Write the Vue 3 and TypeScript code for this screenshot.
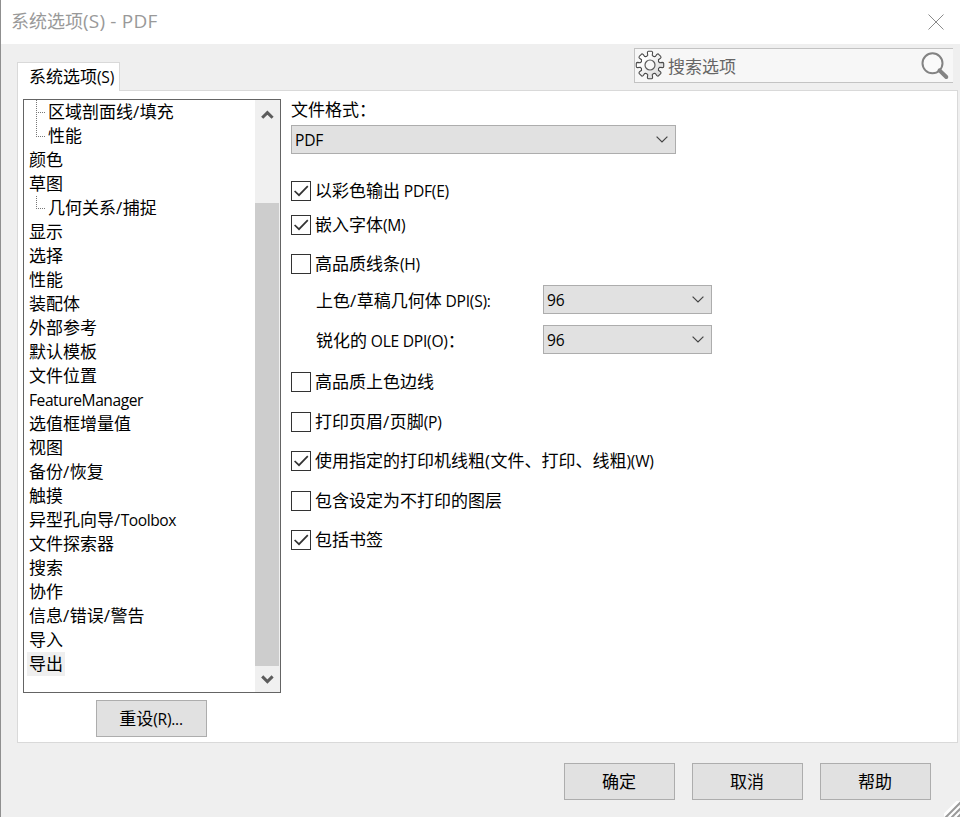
<script setup lang="ts">
import { defineComponent, h, ref } from 'vue'

interface TreeItem {
  label: string
  child?: boolean
  last?: boolean
}

interface Check {
  kind: 'check'
  label: string
  on: boolean
}

interface Dpi {
  kind: 'dpi'
  label: string
  value: string
}

function runClass(run: string): string {
  if (/^[^\x20-\x7e]/.test(run)) return 'han'
  if (run === '/' || run === '(') return 'latin sym'
  return /[a-z]{2}/.test(run) ? 'latin word' : 'latin'
}

// Renders a label with its Latin runs in the smaller interface face.
const Mixed = defineComponent({
  props: { text: { type: String, required: true } },
  setup(props) {
    return () => {
      const runs = props.text.match(/\/|[\x20-\x2e\x30-\x7e]+|[^\x20-\x7e]+/g) ?? []
      return h(
        'span',
        { class: 'mixed' },
        runs.map((r) => h('span', { class: runClass(r) }, r)),
      )
    }
  },
})

const tree: TreeItem[] = [
  { label: '区域剖面线/填充', child: true },
  { label: '性能', child: true, last: true },
  { label: '颜色' },
  { label: '草图' },
  { label: '几何关系/捕捉', child: true, last: true },
  { label: '显示' },
  { label: '选择' },
  { label: '性能' },
  { label: '装配体' },
  { label: '外部参考' },
  { label: '默认模板' },
  { label: '文件位置' },
  { label: 'FeatureManager' },
  { label: '选值框增量值' },
  { label: '视图' },
  { label: '备份/恢复' },
  { label: '触摸' },
  { label: '异型孔向导/Toolbox' },
  { label: '文件探索器' },
  { label: '搜索' },
  { label: '协作' },
  { label: '信息/错误/警告' },
  { label: '导入' },
  { label: '导出' },
]
const selected = ref(tree.length - 1)

const options = ref<(Check | Dpi)[]>([
  { kind: 'check', label: '以彩色输出 PDF(E)', on: true },
  { kind: 'check', label: '嵌入字体(M)', on: true },
  { kind: 'check', label: '高品质线条(H)', on: false },
  { kind: 'dpi', label: '上色/草稿几何体 DPI(S):', value: '96' },
  { kind: 'dpi', label: '锐化的 OLE DPI(O)：', value: '96' },
  { kind: 'check', label: '高品质上色边线', on: false },
  { kind: 'check', label: '打印页眉/页脚(P)', on: false },
  { kind: 'check', label: '使用指定的打印机线粗(文件、打印、线粗)(W)', on: true },
  { kind: 'check', label: '包含设定为不打印的图层', on: false },
  { kind: 'check', label: '包括书签', on: true },
])

function toggle(o: Check | Dpi) {
  if (o.kind === 'check') o.on = !o.on
}

// Outline of the eight-toothed gear around (15, 15).
function gear(): string {
  const pts: string[] = []
  const p = (r: number, deg: number) => {
    const a = (deg * Math.PI) / 180
    return `${(15 + r * Math.cos(a)).toFixed(2)} ${(15 + r * Math.sin(a)).toFixed(2)}`
  }
  for (let i = 0; i < 8; i++) {
    const c = i * 45 - 90
    pts.push(`${i === 0 ? 'M' : 'L'}${p(10, c - 13)}`)
    pts.push(`L${p(12.6, c - 12)}`)
    pts.push(`Q${p(14, c - 10)} ${p(13.8, c - 6)}`)
    pts.push(`L${p(13.8, c + 6)}`)
    pts.push(`Q${p(14, c + 10)} ${p(12.6, c + 12)}`)
    pts.push(`L${p(10, c + 13)}`)
    pts.push(`Q${p(8.6, c + 22.5)} ${p(10, c + 32)}`)
  }
  return pts.join(' ') + 'Z'
}
const gearPath = gear()
</script>

<template>
  <div class="window">
    <header class="titlebar">
      <h1 class="title"><Mixed text="系统选项(S) - PDF" /></h1>
      <svg class="close" width="16" height="16" viewBox="0 0 16 16">
        <path d="M.5 .5 15.5 15.5M15.5 .5 .5 15.5" fill="none" stroke="#8a8a8a" stroke-width="1" />
      </svg>
    </header>

    <div class="top">
      <div class="tab"><Mixed text="系统选项(S)" /></div>
      <div class="search">
        <svg class="gear" width="30" height="30" viewBox="0 0 30 30">
          <defs>
            <linearGradient id="gearFill" x1="0" y1="0" x2="1" y2="1">
              <stop offset="0.3" stop-color="#ffffff" />
              <stop offset="1" stop-color="#cfcfcf" />
            </linearGradient>
          </defs>
          <path :d="gearPath" fill="url(#gearFill)" stroke="#4a4a4a" stroke-width="1.1" />
          <circle cx="15" cy="15" r="5" fill="#f7f7f7" stroke="#5a5a5a" stroke-width="1.2" />
        </svg>
        <span class="hint">搜索选项</span>
        <svg class="lens" width="30" height="30" viewBox="0 0 30 30">
          <circle cx="12.5" cy="12.3" r="10" fill="#fafafa" stroke="#838383" stroke-width="2" />
          <path d="M19.5 19.3 26.3 26" stroke="#838383" stroke-width="4" stroke-linecap="round" />
        </svg>
      </div>
    </div>

    <main class="panel">
      <div class="left">
        <div class="tree">
          <ul class="items">
            <li
              v-for="(t, i) in tree"
              :key="i"
              class="item"
              :class="{ child: t.child, selected: i === selected }"
              @click="selected = i"
            >
              <svg v-if="t.child" class="branch" width="14" height="24" viewBox="0 0 14 24">
                <path
                  :d="t.last ? 'M4.5 0V12.5' : 'M4.5 0V24'"
                  fill="none"
                  stroke="#777"
                  stroke-dasharray="1 1"
                />
                <path d="M4 12.5H13" fill="none" stroke="#777" stroke-dasharray="1 1" />
              </svg>
              <span class="label"><Mixed :text="t.label" /></span>
            </li>
          </ul>
          <div class="scrollbar">
            <svg width="25" height="103" viewBox="0 0 25 103">
              <path d="M7.2 17.8 12.4 12.6 17.6 17.8" fill="none" stroke="#5c5c5c" stroke-width="3" />
            </svg>
            <div class="thumb"></div>
            <svg width="25" height="26" viewBox="0 0 25 26">
              <path d="M7.2 10.4 12.4 15.6 17.6 10.4" fill="none" stroke="#5c5c5c" stroke-width="3" />
            </svg>
          </div>
        </div>
        <button class="btn reset"><Mixed text="重设(R)..." /></button>
      </div>

      <section class="form">
        <div class="format-label">文件格式：</div>
        <div class="select wide">
          <span class="latin">PDF</span>
          <svg width="12" height="7" viewBox="0 0 12 7">
            <path d="M.6 .6 6 6 11.4 .6" fill="none" stroke="#444" stroke-width="1.2" />
          </svg>
        </div>
        <div class="spacer"></div>
        <div
          v-for="o in options"
          :key="o.label"
          class="option"
          :class="o.kind"
          @click="toggle(o)"
        >
          <template v-if="o.kind === 'check'">
            <span class="box">
              <svg v-if="o.on" width="18" height="18" viewBox="0 0 18 18">
                <path d="M2.6 9 7 13.2 15.8 4.2" fill="none" stroke="#333" stroke-width="1.7" />
              </svg>
            </span>
            <span class="check-label"><Mixed :text="o.label" /></span>
          </template>
          <template v-else>
            <span class="dpi-label"><Mixed :text="o.label" /></span>
            <div class="select">
              <span class="latin">{{ o.value }}</span>
              <svg width="12" height="7" viewBox="0 0 12 7">
                <path d="M.6 .6 6 6 11.4 .6" fill="none" stroke="#444" stroke-width="1.2" />
              </svg>
            </div>
          </template>
        </div>
      </section>
    </main>

    <footer class="footer">
      <button class="btn">确定</button>
      <button class="btn">取消</button>
      <button class="btn">帮助</button>
      <svg class="grip" width="16" height="16" viewBox="0 0 16 16">
        <path d="M0 16 16 0M6 16 16 6M12 16 16 12" stroke="#fff" stroke-width="5" />
        <path d="M1 17 17 1M7 17 17 7M13 17 17 13" stroke="#9a9a9a" stroke-width="2" />
      </svg>
    </footer>
  </div>
</template>

<style>
body {
  margin: 0;
  overflow: hidden;
}
</style>

<style scoped>
.window {
  box-sizing: border-box;
  width: 960px;
  height: 817px;
  display: flex;
  flex-direction: column;
  border-left: 1px solid #8f8f8f;
  background: #efefef;
  color: #000;
  font-family: 'Noto Sans CJK SC', sans-serif;
  font-size: 17px;
  line-height: 22px;
  position: relative;
}
.window :deep(.mixed) {
  white-space: pre;
}
.window :deep(.latin) {
  font-family: 'Open Sans', 'Noto Sans', sans-serif;
  font-size: 15.6px;
  letter-spacing: -0.25px;
}
.window :deep(.word) {
  letter-spacing: -0.45px;
}
.window :deep(.sym) {
  font-size: 17px;
  letter-spacing: 0.5px;
}
.titlebar {
  height: 44px;
  flex: none;
  display: flex;
  align-items: center;
  justify-content: space-between;
  box-sizing: border-box;
  padding: 0 16px 1px 10px;
  background: #fff;
  color: #999;
}
.title {
  margin: 0;
  padding-bottom: 2px;
  font-size: 18px;
  font-weight: 400;
}
.title :deep(.latin) {
  font-size: 19px;
  letter-spacing: 0.2px;
}
.top {
  height: 46px;
  flex: none;
  display: flex;
  justify-content: space-between;
  align-items: flex-start;
  padding: 0 7px 0 16px;
}
.tab {
  box-sizing: border-box;
  width: 103px;
  height: 29px;
  margin-top: 18px;
  padding-left: 11px;
  border: 1px solid #d9d9d9;
  border-bottom: 0;
  background: #fff;
  line-height: 25px;
  white-space: nowrap;
  z-index: 1;
}
.search {
  box-sizing: border-box;
  width: 319px;
  height: 35px;
  margin-top: 4px;
  display: flex;
  align-items: center;
  border: 1px solid #c3c3c3;
  border-right: 0;
  background: #f7f7f7;
  color: #666;
}
.gear {
  flex: none;
  margin-top: -1px;
}
.hint {
  flex: 1;
  padding-left: 3px;
}
.lens {
  margin-right: 3px;
}
.panel {
  box-sizing: border-box;
  width: 941px;
  height: 653px;
  flex: none;
  margin-left: 16px;
  border: 1px solid #d9d9d9;
  background: #fff;
  display: flex;
}
.left {
  width: 258px;
  margin-left: 5px;
  padding-top: 8px;
}
.tree {
  box-sizing: border-box;
  height: 594px;
  border: 1px solid #646464;
  display: flex;
  justify-content: space-between;
}
.items {
  list-style: none;
  margin: 0;
  padding: 0 0 0 3px;
}
.item {
  height: 24px;
  display: flex;
}
.item.child {
  padding-left: 5px;
}
.label {
  height: 24px;
  padding: 0 2px;
  white-space: nowrap;
}
.selected .label {
  background: #efefef;
}
.scrollbar {
  width: 25px;
  background: #f0f0f0;
  display: flex;
  flex-direction: column;
}
.thumb {
  flex: 1;
  width: 24px;
  background: #cdcdcd;
}
.btn {
  box-sizing: border-box;
  width: 111px;
  height: 37px;
  padding: 0 1px 2px 0;
  border: 1px solid #adadad;
  border-radius: 0;
  background: #e1e1e1;
  color: #000;
  font: inherit;
}
.reset {
  display: block;
  margin: 7px 0 0 73px;
  padding-bottom: 1px;
}
.form {
  margin-left: 10px;
  display: grid;
  grid-template-rows: 34px 29px 20px 34px 34px 44px 27px 53px 32px 48px 30px 50px 28px;
  align-items: center;
  align-content: start;
}
.format-label {
  padding-top: 2px;
}
.select {
  box-sizing: border-box;
  width: 169px;
  height: 29px;
  padding: 0 7px 0 3px;
  display: flex;
  align-items: center;
  justify-content: space-between;
  border: 1px solid #adadad;
  background: #e1e1e1;
}
.select.wide {
  width: 385px;
}
.option {
  display: flex;
  align-items: center;
  white-space: nowrap;
}
.box {
  box-sizing: border-box;
  width: 20px;
  height: 20px;
  margin-right: 4px;
  border: 1px solid #333;
  background: #fff;
}
.box svg {
  display: block;
}
.check-label {
  padding-bottom: 2px;
}
.dpi {
  padding-left: 25px;
}
.dpi-label {
  width: 227px;
  padding-top: 2px;
}
.footer {
  flex: 1;
  display: flex;
  gap: 17px;
  justify-content: flex-end;
  align-items: flex-start;
  padding: 20px 29px 0 0;
}
.grip {
  position: absolute;
  right: 0;
  bottom: 0;
}
</style>
